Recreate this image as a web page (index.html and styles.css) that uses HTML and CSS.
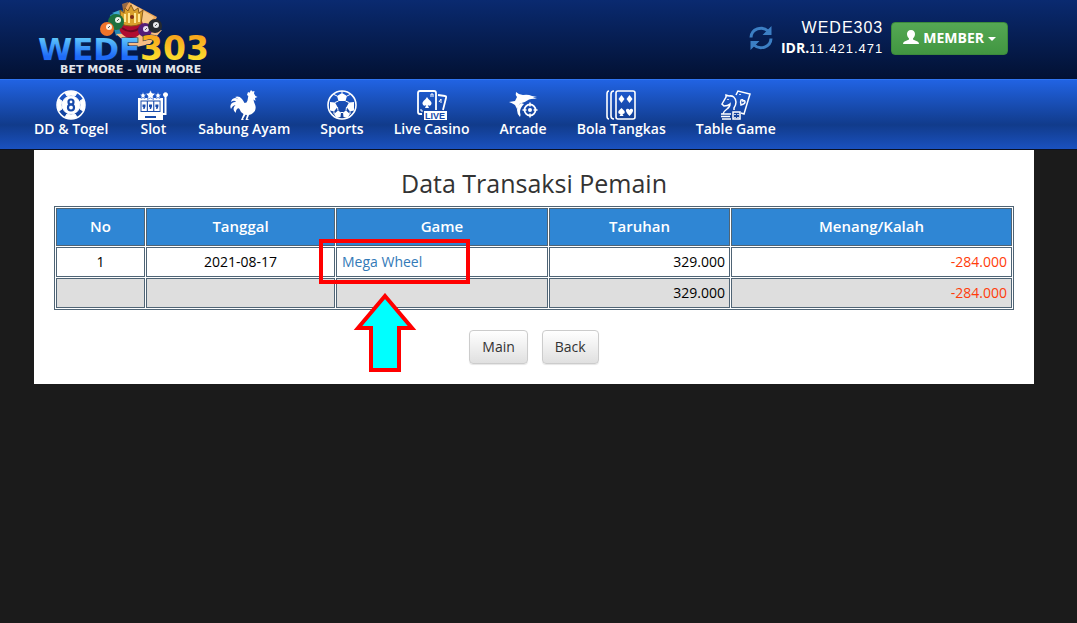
FILE: index.html
```html
<!DOCTYPE html>
<html>
<head>
<meta charset="utf-8">
<title>Data Transaksi Pemain</title>
<link rel="stylesheet" href="styles.css">
</head>
<body>

<div class="header">
	<div class="wrap header_in">
		<a class="logo" href="#">
			<svg width="182" height="78" viewBox="0 0 182 78" role="img" aria-label="WEDE303">
				<defs>
					<linearGradient id="blue" x1="0" y1="0" x2="0" y2="1">
						<stop offset="0.2" stop-color="#5cc4fb"/>
						<stop offset="0.7" stop-color="#1f6bf8"/>
					</linearGradient>
					<linearGradient id="gold" x1="0" y1="0" x2="0" y2="1">
						<stop offset="0.2" stop-color="#f8a71c"/>
						<stop offset="0.8" stop-color="#fbe02e"/>
					</linearGradient>
				</defs>
				<!-- cards -->
				<path d="M76 15l12-5 14 18-20 8z" fill="#2589b4"/>
				<path d="M78 13l8-3 3 8z" fill="#3fa9d0"/>
				<path d="M88 4l6-2 4 12-8 2z" fill="#9a6a43"/>
				<path d="M95 2l28 15-11 21-30-12z" fill="#eda65a"/>
				<path d="M98 4l22 13-9 13-18-12z" fill="#f7c887"/>
				<path d="M82 34l32-2 14-2-12 14-18 4z" fill="#f6bd84"/>
				<!-- chip and crown -->
				<circle cx="97" cy="26" r="12" fill="#b00d30"/>
				<path d="M88 28q9 7 19-1" stroke="#6d0a22" stroke-width="2" fill="none"/>
				<path d="M87 24l-1-14 4 3 1-5 3 3 3-6 3 6 4-3 1 5 4-3-2 14q-10 4-20 0z" fill="#d9a02c" stroke="#8a5a18"/>
				<path d="M91 14v8M95 13v10M101 13v10M105 14v8" stroke="#ffe792" stroke-width="2"/>
				<circle cx="98" cy="17" r="2" fill="#7d2a18"/>
				<!-- balls -->
				<circle cx="82" cy="22" r="8" fill="#1d713e"/>
				<circle cx="84" cy="20" r="3" fill="#e9f2e6"/>
				<circle cx="73" cy="29" r="7" fill="#f0742a"/>
				<circle cx="75" cy="27" r="3" fill="#fff0df"/>
				<circle cx="111" cy="30" r="7" fill="#541d78"/>
				<circle cx="112" cy="29" r="3" fill="#e8dcef"/>
				<circle cx="121" cy="26" r="7" fill="#262a30"/>
				<circle cx="122" cy="25" r="3" fill="#e6e8ea"/>
				<path d="M83 21l2-2M74 28l2-2M111 30l2-2M121 26l2-2" stroke="#555"/>
				<text class="logo_name" x="4" y="60" fill="url(#blue)">WEDE</text>
				<text class="logo_name logo_num" x="106" y="60" fill="url(#gold)">303</text>
				<text class="logo_tag" x="26" y="73">BET MORE - WIN MORE</text>
			</svg>
		</a>
		<div class="account">
			<button class="refresh" type="button" aria-label="Refresh">
				<svg width="24" height="24" viewBox="0 0 24 24" fill="none" stroke="#3c7fc4" stroke-width="3">
					<path d="M2 11.500A10 9.500 0 0 1 19 5M22 12.500A10 9.500 0 0 1 5 19"/>
					<path d="M22.500 0v9h-9zM1.500 24v-9h9z" fill="#3c7fc4" stroke="none"/>
				</svg>
			</button>
			<div class="balance">
				<div class="user">WEDE303</div>
				<div class="money"><b>IDR.</b>11.421.471</div>
			</div>
			<button class="member" type="button">
				<svg width="16" height="14" viewBox="0 0 16 14" fill="#fff"><path d="M8 0c2.700 0 4 1.800 4 4 0 1.800-.8 3.300-2 4.400v1.200l4.500 1.800Q16 12 16 14H0q0-2 1.500-2.600L6 9.600V8.400C4.800 7.300 4 5.800 4 4c0-2.200 1.300-4 4-4z"/></svg>
				MEMBER
				<span class="caret"></span>
			</button>
		</div>
	</div>
</div>

<div class="nav">
	<div class="wrap">
		<ul>
			<li><a href="#">
				<svg viewBox="0 0 30 30" fill="none" stroke="#fff"><circle cx="15" cy="15" r="14" stroke-width="1.500"/><path d="M9 3q6-3 12 0l-2 3q-4-2-8 0zM9 27q6 3 12 0l-2-3q-4 2-8 0zM3 9q-3 6 0 12l3-2q-2-4 0-8zM27 9q3 6 0 12l-3-2q2-4 0-8z" fill="#fff"/><circle cx="15" cy="15" r="9" fill="#fff"/><g stroke="#174aaa" stroke-width="2.200"><circle cx="15" cy="12" r="2.500"/><circle cx="15" cy="17.500" r="3"/></g></svg>
				DD &amp; Togel</a></li>
			<li><a href="#">
				<svg viewBox="0 0 30 30" fill="#fff"><path d="M0 8h25v15h1.500V7a2.500 2.500 0 1 1 2 0v18H25v5H0z"/><path d="M12.500 0l1.500 3 3.500.5-2.500 2.500.5 3.500-3-1.600-3 1.600.5-3.500L7.500 3.500 11 3zM5 2l1 2.200h2.200L6.700 6 7 8.500 5 7.500l-2 1L3.300 6 2 4.200h2zM20 2l1 2.200h2.200L21.700 6l.3 2.500-2-1-2 1 .3-2.500L17 4.200h2z" stroke="#1c57cb" stroke-width=".6"/><path d="M2.500 10.500h20v11.500h-20zM7 26h11v2H7z" fill="#174aaa"/><path d="M3.500 11.500h5.300v9.500H3.500zM9.900 11.500h5.300v9.500H9.900zM16.300 11.500h5.300v9.500h-5.300z"/><path d="M4.500 14.500h3v2l-1 2.500H5.300v-2H4.500zM11 14.500h3v2l-1 2.500h-1.200v-2H11zM17.400 14.500h3v2l-1 2.500h-1.200v-2h-.8z" fill="#174aaa"/></svg>
				Slot</a></li>
			<li><a href="#">
				<svg viewBox="0 0 30 30" fill="#fff"><path d="M18 5l1-3 1.500.7L22 0l1.500 1.500L25.500 1 25 3.500 26.500 6l2 1-2.500 1 .5 3-2-1.500q.3 2.500 1.500 5 2 5-2 8.500-1.500 1.500-4 2l-1.500 4 2 1h-4l1.500-5-1.500-.3-2.500 4.300 1 1h-3l2.500-6q-3-1.500-4-5-1-1.500-2.500 0-1.500 2-1 4-2.500-1.500-2.500-4 0-2 2-4-3 .5-4.500 4-1.500-3 .5-5.500 1.500-2 4.500-1.500Q5.500 9.500 2 12q.5-3.500 4-4 3 0 5 3.500Q9 8 6 7q4-1.500 7 2 1.500 2 2.500 4 2.500 0 3-2.500.5-2.500.8-4.500z"/></svg>
				Sabung Ayam</a></li>
			<li><a href="#">
				<svg viewBox="0 0 30 30" fill="#fff" stroke="#fff"><circle cx="15" cy="15" r="14" fill="none" stroke-width="1.600"/><path d="M15 3l5 3-1.500 5h-7L10 6zM3 12l5 .5 2.500 4.500L7 21.500l-4-1zM27 12l-5 .5-2.500 4.500 3.500 4.500 4-1zM11 20.500l3 2-.5 4.500-4 1L7 24zM19 20.500l-3 2 .5 4.500 4 1L23 24z" stroke="none"/><path d="M10 6L7 4.500M20 6l3-1.500M11.500 11L8 12.500M18.500 11l3.500 1.500M10.500 17l.5 3.500M19.500 17l-.5 3.500M14 22.500h2M15 1v2M7 21.500V24M23 21.500V24" fill="none" stroke-width="1"/></svg>
				Sports</a></li>
			<li><a href="#">
				<svg viewBox="0 0 30 30" fill="none" stroke="#fff" stroke-width="1.800"><path d="M5 24H3q-2 0-2-2V3q0-2 2-2h14q2 0 2 2v17M21 5l7 1q1.500 0 1 2l-3 12"/><path d="M10 7q1 2 3.500 4 2 2 .5 4-1.500 1.300-3.300 0l1.300 3H8l1.300-3q-1.800 1.300-3.300 0-1.500-2 .5-4Q9 9 10 7z" fill="#fff" stroke="none"/><path d="M14 7V4h2v3M4 19v2h2M22 12l2-3v4" stroke-width="1"/><path d="M7 21h23v9H7z" fill="#fff" stroke="none"/><text class="live" x="8" y="29">LIVE</text></svg>
				Live Casino</a></li>
			<li><a href="#">
				<svg viewBox="0 0 30 30" fill="none" stroke="#fff"><path d="M1 12l6-1 2-4q-2-2-1-5 3 3 7 3 5-1 9 1l5 1-4 .5L29 9q-5-.5-8 .5-4 3-9 4L9 19l-2-4q-3-2-6-3z" fill="#fff" stroke="none"/><path d="M13 13q-4 3-4 7 0 4 3 7 1-2 0-5 0-4 4-8z" fill="#fff" stroke="none"/><circle cx="22" cy="20" r="5.500" stroke-width="1.800"/><circle cx="22" cy="20" r="2" fill="#fff" stroke="none"/><path d="M22 12.500v4M22 23.500v4M14.500 20h4M25.500 20h4" stroke-width="1.500"/></svg>
				Arcade</a></li>
			<li><a href="#">
				<svg viewBox="0 0 30 30" fill="none" stroke="#fff" stroke-width="1.600"><rect x="10" y="1" width="19" height="28" rx="2"/><path d="M8 1Q5 1 5 4v22q0 3 3 3M3 1Q1 1 1 4v22q0 3 2 3"/><g fill="#fff" stroke="none"><path d="M15.500 5l3 4-3 4-3-4z"/><path d="M23.500 5l3 4-3 4-3-4z"/><path d="M15.500 18l3 3q1 3-2 3l1 2h-4l1-2q-3 0-2-3zM23.500 20q1-2 3-1 2 2-3 7-5-5-3-7 2-1 3 1z"/></g></svg>
				Bola Tangkas</a></li>
			<li><a href="#">
				<svg viewBox="0 0 30 30" fill="none" stroke="#fff" stroke-width="1.500"><path d="M15 5l2-4 12 3-6 20-3-1M2 24q1-3 4-5 3-2 3-5-2 2-6 2L1 14l4-7V5l3 1q6-1 7 6 0 3-2 6v2"/><path d="M20 10q2-1 2 1 2-1 2 1 0 2-4 3-1-3 0-5z"/><path d="M0 24h10M1 29h9M0 26.500h9"/><rect x="12" y="22" width="7" height="7"/><path d="M14 24v1M17 24v1M14 27v1M17 27v1M7 9v1M19 4v1"/></svg>
				Table Game</a></li>
		</ul>
	</div>
</div>

<div class="wrap content">
	<h1>Data Transaksi Pemain</h1>
	<table>
		<colgroup><col class="c_no"><col class="c_date"><col class="c_game"><col class="c_bet"><col></colgroup>
		<thead>
			<tr><th>No</th><th>Tanggal</th><th>Game</th><th>Taruhan</th><th>Menang/Kalah</th></tr>
		</thead>
		<tbody>
			<tr>
				<td>1</td>
				<td>2021-08-17</td>
				<td class="game">
					<a href="#">Mega Wheel</a>
					<span class="mark"></span>
					<svg class="arrow" width="64" height="80" viewBox="0 0 64 80"><path d="M32 3L59 35H46V77H18V35H5z" fill="#0ff" stroke="#f00" stroke-width="4"/></svg>
				</td>
				<td class="num">329.000</td>
				<td class="num lose">-284.000</td>
			</tr>
			<tr class="total">
				<td></td>
				<td></td>
				<td></td>
				<td class="num">329.000</td>
				<td class="num lose">-284.000</td>
			</tr>
		</tbody>
	</table>
	<div class="buttons">
		<button type="button">Main</button>
		<button type="button">Back</button>
	</div>
</div>

</body>
</html>
```
FILE: styles.css
```css
*{margin:0; padding:0; box-sizing:border-box;}
body{background:#1b1b1b; font:14px/20px "Open Sans", sans-serif; color:#000;}
a{text-decoration:none;}
button{font-family:inherit; cursor:pointer;}
.wrap{margin:0 43px 0 34px;}

.header{background:linear-gradient(#0a2a70, #021133);}
.header_in{display:flex; justify-content:space-between; height:79px;}
.logo svg{display:block;}
.logo_name{font:bold 31px "DejaVu Sans", sans-serif; stroke:#0b2150; stroke-width:1px; paint-order:stroke;}
.logo_num{font-size:33px;}
.logo_tag{font:bold 11px "DejaVu Sans", sans-serif; fill:#e4e6ec;}

.account{display:flex; align-items:center; height:76px; padding-right:26px;}
.refresh{width:24px; height:24px; border:0; background:none; margin-right:8px;}
.refresh svg{display:block;}
.balance{color:#fff; text-align:right; font-family:"Liberation Sans", Arial, sans-serif; letter-spacing:1px; margin-right:8px;}
.user{font-size:16px;}
.money{font-size:13px;}
.money b{font-family:"Open Sans", sans-serif; font-size:14px; letter-spacing:0;}
.member{display:flex; align-items:center; gap:4px; height:33px; padding:0 11px 2px; border:1px solid #3b8a3b; border-radius:4px; background:linear-gradient(#55a854, #419641); color:#fff; font-size:14px; font-weight:bold;}
.caret{border:4px solid transparent; border-top-color:#fff; border-bottom:0; margin-top:4px;}

.nav{border-top:1px solid #2f74f0; border-bottom:1px solid #0a1022; background:linear-gradient(#2163e3, #113b8b 65%, #1a51bf);}
.nav ul{display:flex; flex-wrap:wrap; gap:30px; list-style-type:none; padding:10px 0 11px;}
.nav a{display:block; color:#fff; font-weight:600; line-height:18px; text-align:center;}
.nav svg{display:block; width:30px; height:30px; margin:0 auto;}
.live{font:bold 9px "Liberation Sans", Arial, sans-serif; fill:#174aaa; stroke:none;}

.content{background:#fff; padding:20px;}
h1{font-size:25px; line-height:26px; font-weight:500; color:#333; text-align:center; margin-bottom:10px;}
table{width:100%; border:1px solid #4f6475; border-collapse:separate; border-spacing:1px; table-layout:fixed;}
th,td{border:1px solid #4f6475; padding:0 5px; height:30px; text-align:center;}
th{height:38px; padding-bottom:2px; background:#2f86d4; color:#fff; font-size:15px; font-weight:600;}
.c_no{width:89px;}
.c_date{width:189px;}
.c_game{width:212px;}
.c_bet{width:181px;}
.game{position:relative; text-align:left;}
.game a{color:#337ab7;}
td.num{text-align:right; padding-right:4px;}
.lose{color:#ff3c0a;}
.total td{background:#dedede;}

/* highlight over the game link */
.mark{position:absolute; left:-18px; top:-9px; width:151px; height:45px; border:4px solid #f00;}
.arrow{position:absolute; left:16px; top:45px;}

.buttons{display:flex; justify-content:center; gap:14px; margin-top:20px;}
.buttons button{height:34px; padding:0 12px 2px; border:1px solid #ccc; border-radius:4px; background:linear-gradient(#fff, #e0e0e0); box-shadow:0 1px 1px rgba(0,0,0,.1); color:#333; font-size:14px;}
```
